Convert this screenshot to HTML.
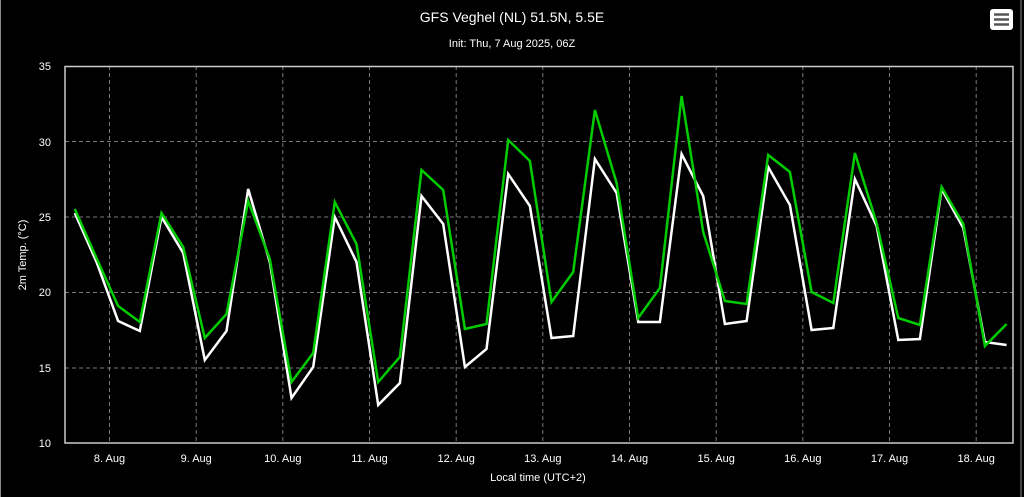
<!DOCTYPE html>
<html><head><meta charset="utf-8"><style>
html,body{margin:0;padding:0;background:#000;width:1024px;height:497px;overflow:hidden}
svg{display:block;font-family:"Liberation Sans",sans-serif}
</style></head><body>
<svg width="1024" height="497" viewBox="0 0 1024 497">
<rect x="0" y="0" width="1024" height="497" fill="#000"/>
<line x1="0.5" y1="0" x2="0.5" y2="497" stroke="#888" stroke-width="1"/>
<line x1="1021" y1="0" x2="1021" y2="497" stroke="#888" stroke-width="1"/>
<text x="512" y="22" fill="#fff" font-size="14" text-anchor="middle">GFS Veghel (NL) 51.5N, 5.5E</text>
<text x="512" y="47" fill="#fff" font-size="11" text-anchor="middle">Init: Thu, 7 Aug 2025, 06Z</text>
<rect x="990" y="9" width="23" height="21" rx="3" fill="#fff"/>
<g stroke="#555" stroke-width="2.5"><line x1="994" y1="14.5" x2="1009" y2="14.5"/><line x1="994" y1="19.5" x2="1009" y2="19.5"/><line x1="994" y1="24.5" x2="1009" y2="24.5"/></g>
<g stroke="#777" stroke-width="1" stroke-dasharray="4,3">
<line x1="65" y1="141.5" x2="1013" y2="141.5"/><line x1="65" y1="292.5" x2="1013" y2="292.5"/>
<line x1="65" y1="217" x2="1013" y2="217"/><line x1="65" y1="368" x2="1013" y2="368"/>
<line x1="109.5" y1="66" x2="109.5" y2="443"/><line x1="196.2" y1="66" x2="196.2" y2="443"/>
<line x1="282.8" y1="66" x2="282.8" y2="443"/><line x1="369.5" y1="66" x2="369.5" y2="443"/>
<line x1="456.2" y1="66" x2="456.2" y2="443"/><line x1="542.8" y1="66" x2="542.8" y2="443"/>
<line x1="629.5" y1="66" x2="629.5" y2="443"/><line x1="716.2" y1="66" x2="716.2" y2="443"/>
<line x1="802.8" y1="66" x2="802.8" y2="443"/><line x1="889.5" y1="66" x2="889.5" y2="443"/>
<line x1="976.2" y1="66" x2="976.2" y2="443"/>
</g>
<rect x="65" y="66.5" width="948" height="376.5" fill="none" stroke="#ccc" stroke-width="1.5"/>
<g fill="#fff" font-size="11" text-anchor="end">
<text x="51" y="70">35</text><text x="51" y="146">30</text><text x="51" y="221">25</text>
<text x="51" y="296">20</text><text x="51" y="372">15</text><text x="51" y="447">10</text>
</g>
<g fill="#fff" font-size="11" text-anchor="middle">
<text x="109.5" y="462">8. Aug</text><text x="196.2" y="462">9. Aug</text><text x="282.8" y="462">10. Aug</text>
<text x="369.5" y="462">11. Aug</text><text x="456.2" y="462">12. Aug</text><text x="542.8" y="462">13. Aug</text>
<text x="629.5" y="462">14. Aug</text><text x="716.2" y="462">15. Aug</text><text x="802.8" y="462">16. Aug</text>
<text x="889.5" y="462">17. Aug</text><text x="976.2" y="462">18. Aug</text>
</g>
<text x="538" y="481" fill="#fff" font-size="11" text-anchor="middle">Local time (UTC+2)</text>
<text transform="translate(26,255) rotate(-90)" fill="#fff" font-size="11" text-anchor="middle">2m Temp. (°C)</text>
<polyline fill="none" stroke="#fff" stroke-width="2.5" stroke-linejoin="miter" points="74.8,213 96.5,262 118.1,321 139.8,331 161.5,217 183.2,253 204.8,360 226.5,331 248.2,189 269.8,262 291.5,398 313.2,367 334.8,217 356.5,262 378.2,405 399.9,383 421.5,196 443.2,224 464.9,367 486.5,349 508.2,174 529.9,206 551.5,338 573.2,336 594.9,159 616.6,193 638.2,322 659.9,322 681.6,154 703.2,196 724.9,324 746.6,321 768.2,167 789.9,205 811.6,330 833.3,328 854.9,179 876.6,226 898.3,340 919.9,339 941.6,189 963.3,228 984.9,342 1006.6,345"/>
<polyline fill="none" stroke="#00cc00" stroke-width="2.5" stroke-linejoin="miter" points="74.8,209 96.5,258 118.1,306 139.8,322 161.5,213 183.2,247 204.8,338 226.5,314 248.2,201 269.8,259 291.5,382 313.2,353 334.8,202 356.5,244 378.2,382 399.9,357 421.5,170 443.2,190 464.9,329 486.5,324 508.2,140 529.9,161 551.5,302 573.2,272 594.9,110 616.6,183 638.2,318 659.9,288 681.6,96 703.2,232 724.9,301 746.6,304 768.2,155 789.9,172 811.6,292 833.3,303 854.9,153 876.6,223 898.3,318 919.9,325 941.6,187 963.3,224 984.9,346 1006.6,324"/>
</svg>
</body></html>
